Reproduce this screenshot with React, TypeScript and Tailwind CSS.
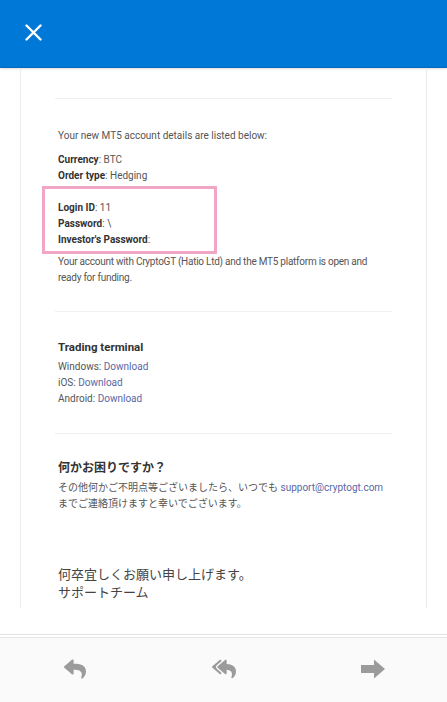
import { FaReply, FaReplyAll } from 'react-icons/fa';

const font = { fontFamily: 'Roboto, "Noto Sans CJK JP", sans-serif' };

function Divider({ className = '' }: { className?: string }) {
  return <div className={`h-px bg-[#efeff1] ${className}`} />;
}

function Label({ name, value }: { name: string; value?: string }) {
  return (
    <p className="h-4 leading-4">
      <span className="font-bold text-[#333]">{name}</span>
      <span>: {value}</span>
    </p>
  );
}

export default function App() {
  return (
    <div className="flex h-[702px] w-[447px] flex-col overflow-hidden bg-white" style={font}>
      {/* top bar */}
      <header className="flex h-[68px] shrink-0 items-center border-b border-[#0a68b8] bg-[#0078d7] pl-[25px] shadow-sm">
        <svg width="17" height="17" viewBox="0 0 17 17" className="-mt-[2px]">
          <path d="M1.5 1.5 L15.5 15.5 M15.5 1.5 L1.5 15.5" stroke="white" strokeWidth="2.4" strokeLinecap="round" />
        </svg>
      </header>

      {/* mail body */}
      <main className="h-[566px] shrink-0 px-5">
        <div className="h-[540px] overflow-hidden border-x border-[#ececee] px-[34px] text-[10px] text-[#555]">
          <Divider className="mt-[30px]" />

          <div className="px-[3px]">
            <p className="mt-[29px] h-4 leading-4">Your new MT5 account details are listed below:</p>

            <div className="mt-2">
              <Label name="Currency" value="BTC" />
              <Label name="Order type" value="Hedging" />
            </div>

            <div className="relative mt-4">
              <Label name="Login ID" value="11" />
              <Label name="Password" value="\" />
              <Label name="Investor's Password" />
              <div className="pointer-events-none absolute -left-[16px] -top-[14px] h-[68px] w-[175px] border-[3px] border-[#f2a6c5]" />
            </div>

            <p className="mt-[6px] leading-4 tracking-[-0.25px]">
              Your account with CryptoGT (Hatio Ltd) and the MT5 platform is open and ready for funding.
            </p>
          </div>

          <Divider className="mt-[25px]" />

          <div className="px-[3px]">
            <h3 className="mt-[26px] h-[18px] text-[11.5px] font-bold leading-[18px] text-[#333]">Trading terminal</h3>
            <div className="mt-[3px]">
              <p className="h-4 leading-4">Windows: <span className="text-[#5a67a6]">Download</span></p>
              <p className="h-4 leading-4">iOS: <span className="text-[#5a67a6]">Download</span></p>
              <p className="h-4 leading-4">Android: <span className="text-[#5a67a6]">Download</span></p>
            </div>
          </div>

          <Divider className="mt-[26px]" />

          <div className="px-[3px]">
            <h3 className="mt-[24px] h-5 text-[12px] font-bold leading-5 text-[#333]">何かお困りですか？</h3>
            <div className="mt-[2px]">
              <p className="h-4 leading-4">
                その他何かご不明点等ございましたら、いつでも <span className="text-[#5a67a6]">support@cryptogt.com</span>
              </p>
              <p className="h-4 leading-4">までご連絡頂けますと幸いでございます。</p>
            </div>

            <div className="mt-[54px] text-[13px] text-[#444]">
              <p className="h-[18px] leading-[18px]">何卒宜しくお願い申し上げます。</p>
              <p className="h-[18px] leading-[18px]">サポートチーム</p>
            </div>
          </div>
        </div>
      </main>

      {/* action bar */}
      <footer className="flex-1 border-t-[1.5px] border-[#e2e2e4] bg-[#fafafa]">
        <div className="h-[2px] bg-white" />
        <div className="flex h-[63px] items-center border-t-[1.5px] border-[#e6e6e8] text-[#9b9b9b]">
          <div className="flex flex-1 justify-center">
            <FaReply size={22} />
          </div>
          <div className="flex flex-1 justify-center">
            <FaReplyAll size={24} />
          </div>
          <div className="flex flex-1 justify-center">
            <svg width="26" height="20" viewBox="0 0 26 20">
              <path d="M1 6 H14 V0.5 L25 10 L14 19.5 V14 H1 Z" fill="#9b9b9b" />
            </svg>
          </div>
        </div>
      </footer>
    </div>
  );
}
